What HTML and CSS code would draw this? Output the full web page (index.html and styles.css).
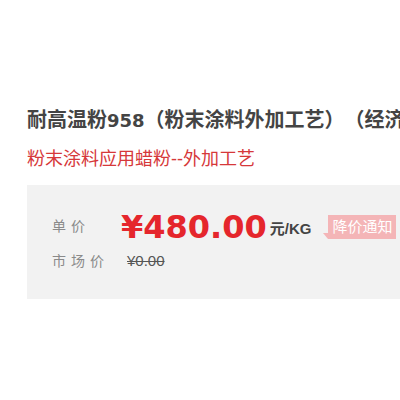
FILE: index.html
```html
<!DOCTYPE html>
<html lang="zh-CN">
<head>
    <meta charset="UTF-8">
    <meta name="viewport" content="width=device-width, initial-scale=1.0">
    <title>耐高温粉958</title>
    <link rel="stylesheet" href="styles.css">
</head>
<body>
    <div class="product">
        <h1 class="name">耐高温粉<span class="num">958</span>（粉末涂料外加工艺）（经济型）</h1>
        <p class="desc">粉末涂料应用蜡粉--外加工艺</p>

        <div class="price-box">
            <div class="row price-row">
                <span class="label">单价</span>
                <span class="price">¥480.00</span>
                <span class="unit">元/KG</span>
                <a class="notify" href="#">降价通知</a>
            </div>
            <div class="row">
                <span class="label">市场价</span>
                <del class="old-price">¥0.00</del>
            </div>
        </div>
    </div>
</body>
</html>
```

FILE: styles.css
```css
html, body {
    margin: 0;
    overflow: hidden;
    background: #fff;
    font-family: "Liberation Sans", "Noto Sans CJK SC", sans-serif;
}
.product {
    padding: 107px 0 0 27px;
}
.name {
    margin: 0;
    font-size: 20px;
    line-height: 24px;
    font-weight: bold;
    color: #444;
    white-space: nowrap;
    overflow: hidden;
    text-spacing-trim: space-all;
    font-family: "Noto Sans CJK SC", sans-serif;
}
.name .num {
    font-family: "DejaVu Sans", sans-serif;
    font-size: 18px;
}
.desc {
    margin: 14px 0 0;
    font-size: 18px;
    line-height: 24px;
    color: #d6383a;
    white-space: nowrap;
}
.price-box {
    margin-top: 14px;
    height: 114px;
    padding: 23px 0 0 25px;
    box-sizing: border-box;
    background: #f2f2f2;
}
.row {
    display: flex;
    align-items: center;
}
.label {
    width: 75px;
    flex-shrink: 0;
    font-size: 14px;
    letter-spacing: 5px;
    color: #8a8a8a;
}
.price-row .label {
    padding-bottom: 4px;
}
.price {
    margin-left: -6px;
    font-family: "DejaVu Sans", sans-serif;
    font-weight: bold;
    font-size: 32px;
    color: #e5262c;
}
.unit {
    margin-left: 3px;
    font-size: 15px;
    font-weight: bold;
    color: #444;
}
.notify {
    position: relative;
    flex-shrink: 0;
    white-space: nowrap;
    margin-left: 17px;
    padding: 0 4px;
    line-height: 24px;
    font-size: 15px;
    color: #fff;
    background: #f4b5b7;
    text-decoration: none;
}
.notify::before {
    content: "";
    position: absolute;
    left: -5px;
    bottom: 0;
    border-style: solid;
    border-width: 0 5px 6px 0;
    border-color: transparent #f4b5b7 transparent transparent;
}
.row + .row {
    margin-top: 4px;
}
.old-price {
    font-size: 15px;
    color: #555;
}
```
